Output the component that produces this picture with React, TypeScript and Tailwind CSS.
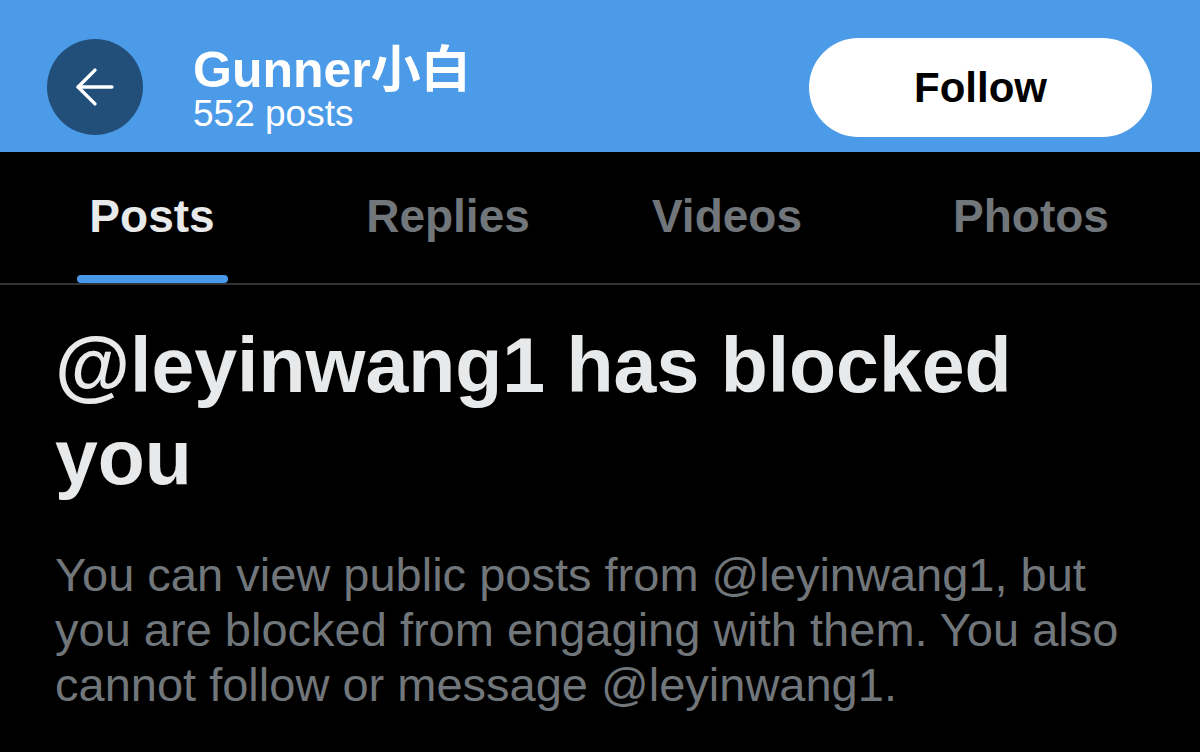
import { ArrowLeft } from "lucide-react";

const tabs = [
  { label: "Posts", width: "w-[304px]", active: true },
  { label: "Replies", width: "w-[288px]", active: false },
  { label: "Videos", width: "w-[270px]", active: false },
  { label: "Photos", width: "w-[338px]", active: false },
];

export default function App() {
  return (
    <div className="w-[1200px] h-[752px] bg-black overflow-hidden font-['Liberation_Sans',sans-serif]">
      <header className="h-[152px] bg-[#4c9be8] flex items-center pt-[22px] pl-[47px] pr-[48px]">
        <button className="w-[96px] h-[96px] rounded-full bg-[#224f7a] flex items-center justify-center text-white">
          <ArrowLeft size={58} strokeWidth={1.4} />
        </button>
        <div className="ml-[50px] flex flex-col text-white mt-[2px]">
          <span className="text-[50px] font-bold leading-[50px] font-['Liberation_Sans','Noto_Sans_CJK_SC',sans-serif]">
            Gunner小白
          </span>
          <span className="text-[37px] leading-[37px]">552 posts</span>
        </div>
        <button className="ml-auto w-[343px] h-[99px] rounded-full bg-white text-black text-[42px] font-bold">
          Follow
        </button>
      </header>

      <nav className="flex h-[133px] border-b-2 border-[#2f3336]">
        {tabs.map((t) => (
          <div key={t.label} className={`${t.width} flex flex-col items-center justify-end`}>
            <span
              className={`text-[46px] font-bold leading-none mb-[36px] ${
                t.active ? "text-[#e7e9ea]" : "text-[#71767b]"
              }`}
            >
              {t.label}
            </span>
            <div className={`h-[8px] w-[151px] rounded-full ${t.active ? "bg-[#4a99e9]" : "bg-transparent"}`} />
          </div>
        ))}
      </nav>

      <main className="px-[55px] pt-[34px]">
        <h1 className="text-[77px] font-bold leading-[92px] text-[#e7e9ea]">
          @leyinwang1 has blocked
          <br />
          you
        </h1>
        <p className="mt-[44px] text-[47px] leading-[55px] text-[#71767b]">
          <span className="block">You can view public posts from @leyinwang1, but</span>
          <span className="block">you are blocked from engaging with them. You also</span>
          <span className="block">cannot follow or message @leyinwang1.</span>
        </p>
      </main>
    </div>
  );
}
